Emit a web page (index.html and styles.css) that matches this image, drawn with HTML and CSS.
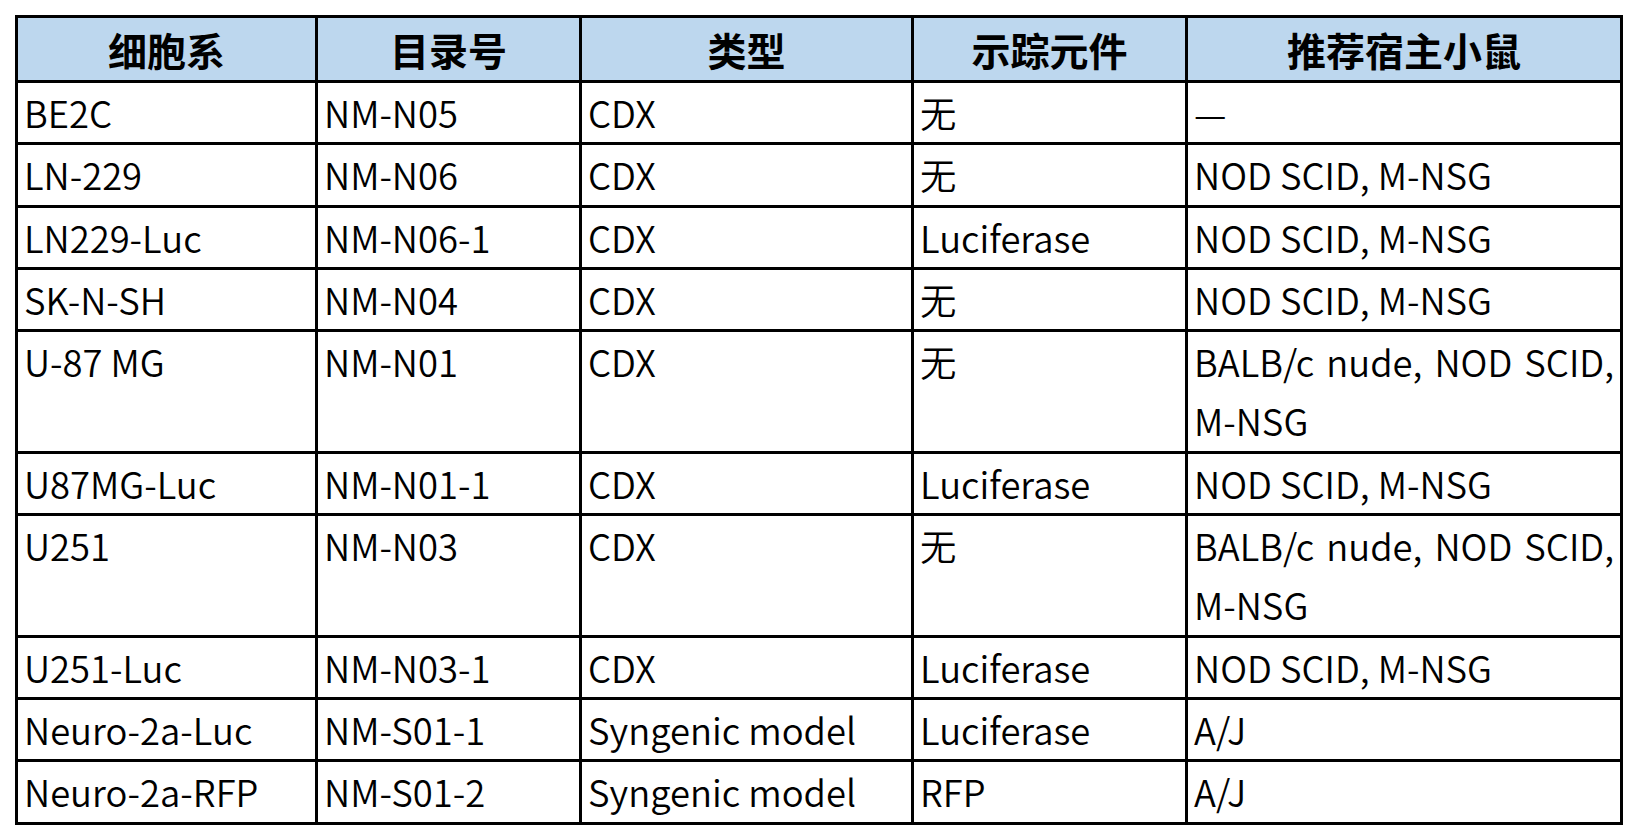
FILE: index.html
```html
<!DOCTYPE html>
<html lang="zh-CN">
<head>
<meta charset="utf-8">
<title>细胞系</title>
<link rel="stylesheet" href="styles.css">
</head>
<body>
<table class="grid">
  <colgroup>
    <col class="c1"><col class="c2"><col class="c3"><col class="c4"><col class="c5">
  </colgroup>
  <thead>
    <tr><th>细胞系</th><th>目录号</th><th>类型</th><th>示踪元件</th><th>推荐宿主小鼠</th></tr>
  </thead>
  <tbody>
    <tr><td>BE2C</td><td>NM-N05</td><td>CDX</td><td>无</td><td class="host">—</td></tr>
    <tr><td>LN-229</td><td>NM-N06</td><td>CDX</td><td>无</td><td class="host">NOD SCID, M-NSG</td></tr>
    <tr><td>LN229-Luc</td><td>NM-N06-1</td><td>CDX</td><td>Luciferase</td><td class="host">NOD SCID, M-NSG</td></tr>
    <tr><td>SK-N-SH</td><td>NM-N04</td><td>CDX</td><td>无</td><td class="host">NOD SCID, M-NSG</td></tr>
    <tr><td>U-87 MG</td><td>NM-N01</td><td>CDX</td><td>无</td><td class="host">BALB/c nude, NOD SCID, M-NSG</td></tr>
    <tr><td>U87MG-Luc</td><td>NM-N01-1</td><td>CDX</td><td>Luciferase</td><td class="host">NOD SCID, M-NSG</td></tr>
    <tr><td>U251</td><td>NM-N03</td><td>CDX</td><td>无</td><td class="host">BALB/c nude, NOD SCID, M-NSG</td></tr>
    <tr><td>U251-Luc</td><td>NM-N03-1</td><td>CDX</td><td>Luciferase</td><td class="host">NOD SCID, M-NSG</td></tr>
    <tr><td>Neuro-2a-Luc</td><td>NM-S01-1</td><td>Syngenic model</td><td>Luciferase</td><td class="host">A/J</td></tr>
    <tr><td>Neuro-2a-RFP</td><td>NM-S01-2</td><td>Syngenic model</td><td>RFP</td><td class="host">A/J</td></tr>
  </tbody>
</table>
</body>
</html>
```
FILE: styles.css
```css
html, body {
  margin: 0;
  padding: 0;
  background: #ffffff;
}
body {
  padding: 15px;
  font-family: "Noto Sans CJK SC", "Noto Sans", sans-serif;
  color: #000000;
}
.grid {
  border-collapse: separate;
  border-spacing: 0;
  table-layout: fixed;
  width: 1608px;
  border-top: 3px solid #000;
  border-left: 3px solid #000;
}
.c1 { width: 300px; }
.c2 { width: 264px; }
.c3 { width: 332px; }
.c4 { width: 274px; }
.c5 { width: 435px; }
.grid th,
.grid td {
  border-right: 3px solid #000;
  border-bottom: 3px solid #000;
  padding: 0 0 0 6px;
  box-sizing: border-box;
}
.grid th {
  background: #bdd7ee;
  height: 65px;
  font-size: 39px;
  font-weight: 700;
  line-height: 62px;
  text-align: center;
  padding: 0;
}
.grid td {
  font-size: 36.4px;
  font-weight: 350;
  line-height: 59.3px;
  text-align: left;
  vertical-align: top;
}
.grid td.host {
  text-align: justify;
  padding-right: 6px;
}
```
